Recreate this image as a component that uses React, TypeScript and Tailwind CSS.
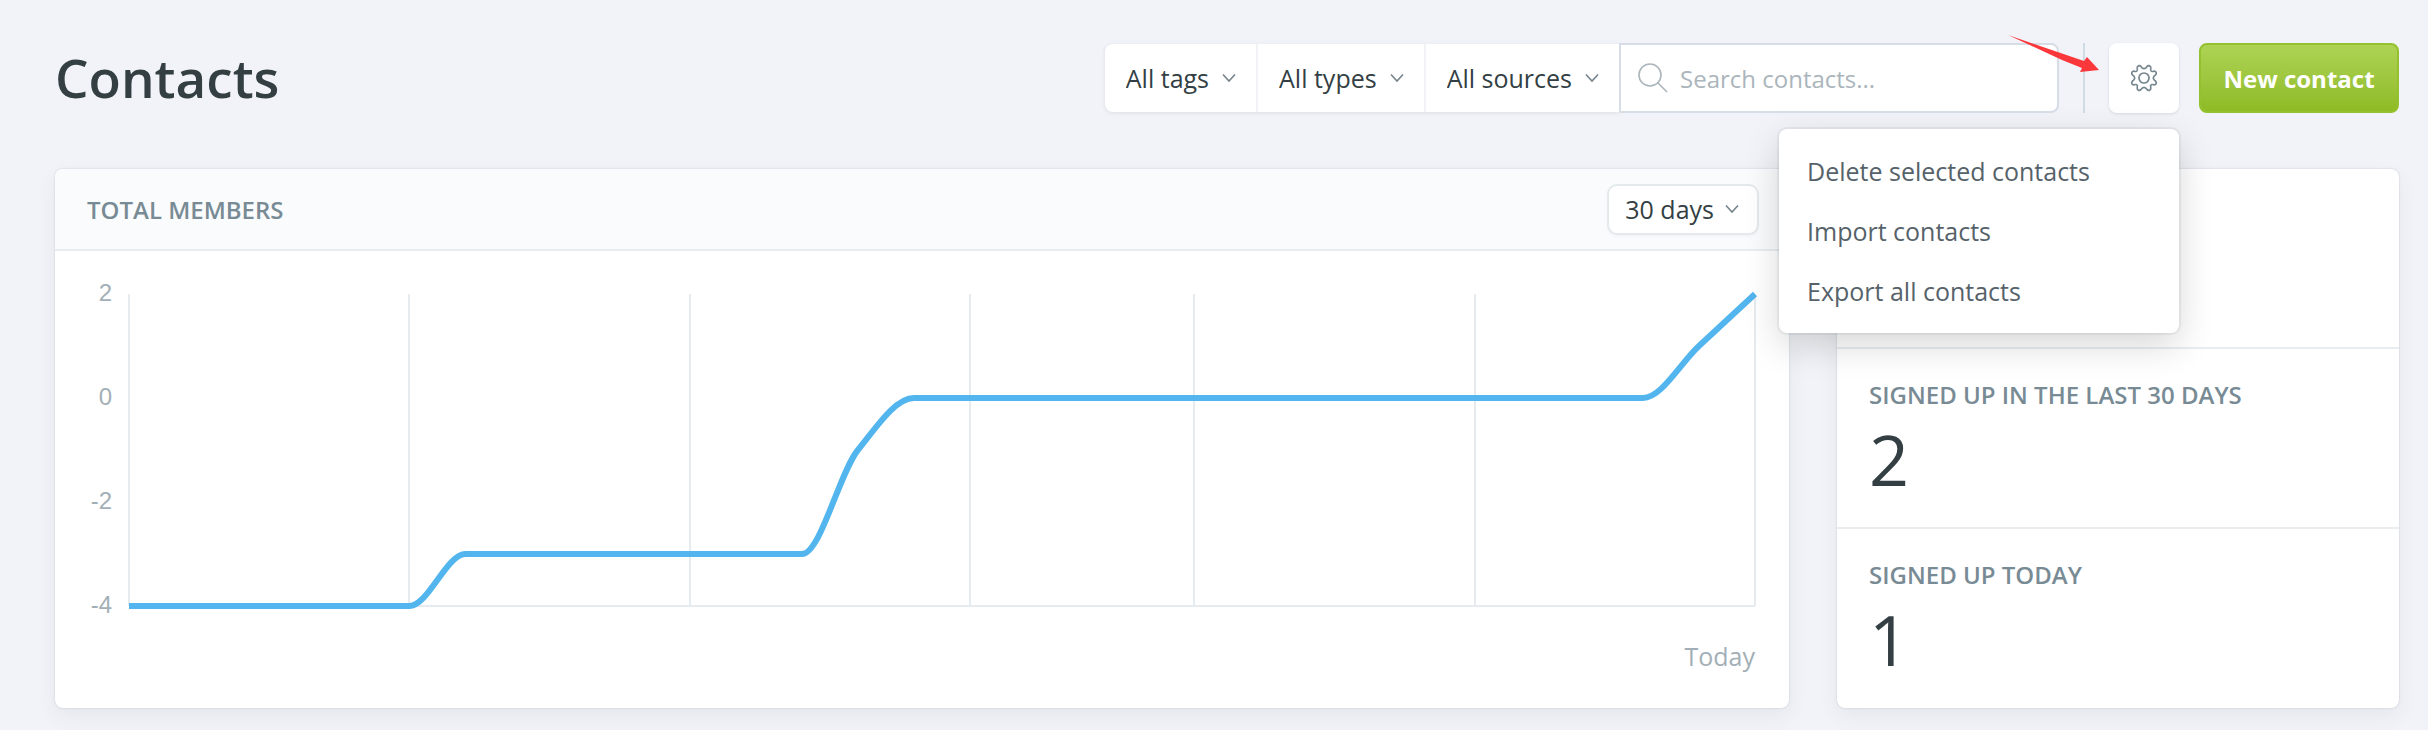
import { useState } from "react";

interface FilterProps {
	label: string;
	name: string;
}

interface StatProps {
	label: string;
	value: number;
}

const filters = [
	{ name: "tags", label: "All tags" },
	{ name: "types", label: "All types" },
	{ name: "sources", label: "All sources" },
];

const menuItems = [
	"Delete selected contacts",
	"Import contacts",
	"Export all contacts",
];

// members per day, oldest first
const members = [
	-4, -4, -4, -4, -4, -4, -3, -3, -3, -3, -3, -3, -3, -1, 0, 0, 0, 0, 0, 0, 0,
	0, 0, 0, 0, 0, 0, 0, 1, 2,
];
const yLabels = [2, 0, -2, -4];
const gridDays = [0, 5, 10, 15, 19, 24, 29];

const CHART_WIDTH = 1626;
const CHART_HEIGHT = 312;
const MAX = 2;
const MIN = -4;

const toX = (day: number) => (day / (members.length - 1)) * CHART_WIDTH;
const toY = (value: number) => ((MAX - value) / (MAX - MIN)) * CHART_HEIGHT;

// monotone cubic, so the flat parts never overshoot
const buildPath = (values: number[]) => {
	const slopes = values.slice(1).map((value, i) => value - values[i]);
	const tangents = values.map((_, i) => {
		if (i === 0) return slopes[0];
		if (i === values.length - 1) return slopes[i - 1];
		const before = slopes[i - 1];
		const after = slopes[i];
		return before * after <= 0 ? 0 : (2 * before * after) / (before + after);
	});

	return values
		.map((value, i) => {
			if (i === 0) return `M${toX(0)},${toY(value)}`;
			const c1 = values[i - 1] + tangents[i - 1] / 3;
			const c2 = value - tangents[i] / 3;
			return `C${toX(i - 2 / 3)},${toY(c1)} ${toX(i - 1 / 3)},${toY(c2)} ${toX(i)},${toY(value)}`;
		})
		.join(" ");
};

const Chevron = ({ className }: { className: string }) => (
	<svg
		viewBox="0 0 14 9"
		className={`pointer-events-none absolute top-1/2 h-[9px] w-[14px] -translate-y-1/2 ${className}`}
		fill="none"
		stroke="#75838b"
		strokeWidth="1.6"
	>
		<path d="M1 1l6 6.5L13 1" />
	</svg>
);

const Filter = ({ label, name }: FilterProps) => (
	<div className="relative border-r-2 border-[#f1f3f6] last-of-type:border-r-0">
		<select
			aria-label={label}
			name={name}
			className="field-sizing-content h-full appearance-none bg-transparent pt-[2px] pr-[47px] pl-[21px] text-[25px] text-[#333f44] outline-none"
		>
			<option>{label}</option>
		</select>
		<Chevron className="right-[20px]" />
	</div>
);

const SearchIcon = () => (
	<svg
		viewBox="0 0 30 30"
		className="size-[30px] shrink-0"
		fill="none"
		stroke="#abb5bc"
		strokeWidth="1.6"
	>
		<circle cx="12" cy="12" r="11" />
		<path d="M19.5 19.5L29 29" />
	</svg>
);

const GearIcon = () => (
	<svg
		viewBox="0 0 28 28"
		className="size-[28px]"
		fill="none"
		stroke="#75868f"
		strokeWidth="1.7"
		strokeLinejoin="round"
	>
		<circle cx="14" cy="14" r="5" />
		<path d="M8.3 1.9Q9.9 1.2 11 2.6Q12.3 4.7 14 4.7Q15.7 4.7 17 2.6Q18.1 1.2 19.7 1.9Q21 2.6 20.8 4.2Q20.2 6.6 21.1 7.1Q21.6 7.9 23.8 7.2Q25.5 7 26.1 8.3Q26.8 9.9 25.4 11Q23.3 12.3 23.3 14Q23.3 15.7 25.4 17Q26.8 18.1 26.1 19.7Q25.5 21 23.8 20.8Q21.6 20.1 21.1 20.9Q20.2 21.4 20.8 23.8Q21 25.4 19.7 26.1Q18.1 26.8 17 25.4Q15.7 23.3 14 23.3Q12.3 23.3 11 25.4Q9.9 26.8 8.3 26.1Q7 25.4 7.2 23.8Q7.8 21.4 6.9 20.9Q6.4 20.1 4.2 20.8Q2.5 21 1.9 19.7Q1.2 18.1 2.6 17Q4.7 15.7 4.7 14Q4.7 12.3 2.6 11Q1.2 9.9 1.9 8.3Q2.5 7 4.2 7.2Q6.4 7.9 6.9 7.1Q7.8 6.6 7.2 4.2Q7 2.6 8.3 1.9Z" />
	</svg>
);

const Arrow = () => (
	<svg
		viewBox="0 0 92 38"
		className="pointer-events-none absolute -top-[8px] -right-[15px] h-[38px] w-[92px] max-w-none"
		fill="#fa373b"
	>
		<path d="M0 0L76 26L79 22L91 35L72 37L74 33L54 25Z" />
	</svg>
);

const Stat = ({ label, value }: StatProps) => (
	<div className="h-[180px] border-t-2 border-[#e9edf0] px-8 pt-[30px]">
		<h3 className="text-[24px] leading-[32px] font-semibold text-[#788b95] uppercase">
			{label}
		</h3>
		<p className="text-[70px] leading-[96px] text-[#333f42]">{value}</p>
	</div>
);

const Chart = () => (
	<div className="flex pt-[41px] pr-[34px] pl-[32px]">
		<div className="flex h-[314px] w-[25px] flex-col justify-between text-right font-['Liberation_Sans',sans-serif] text-[24px] leading-[2px] text-[#a3afb6]">
			{yLabels.map((label) => (
				<span key={label}>{label}</span>
			))}
		</div>
		<div className="ml-[17px] min-w-0 flex-1">
			<svg
				viewBox={`0 0 ${CHART_WIDTH} ${CHART_HEIGHT}`}
				preserveAspectRatio="none"
				className="mt-[2px] h-[312px] w-full overflow-visible"
				fill="none"
			>
				<g stroke="#e6ebef" strokeWidth="2">
					{gridDays.map((day) => (
						<path
							key={day}
							d={`M${Math.round(toX(day))},0V${CHART_HEIGHT}`}
							vectorEffect="non-scaling-stroke"
						/>
					))}
					<path
						d={`M0,${CHART_HEIGHT}H${CHART_WIDTH}`}
						vectorEffect="non-scaling-stroke"
					/>
				</g>
				<path
					d={buildPath(members)}
					stroke="#52b5ee"
					strokeWidth="6"
					vectorEffect="non-scaling-stroke"
				/>
			</svg>
			<p className="mt-[32px] text-right text-[25px] leading-[36px] text-[#a3afb6]">
				Today
			</p>
		</div>
	</div>
);

const App = () => {
	const [menuOpen, setMenuOpen] = useState(true);

	return (
		<div className="min-h-screen bg-[#f2f3f8] pr-[29px] pb-[22px] pl-[55px] font-['Open_Sans',sans-serif]">
			<header className="flex items-center pt-[43px]">
				<h1 className="text-[53px] leading-[70px] font-semibold text-[#333f42]">
					Contacts
				</h1>
				<div className="ml-auto flex h-[70px]">
					<div className="my-[1px] flex rounded-l-lg bg-white shadow-[0_1px_4px_rgba(60,75,100,0.12)]">
						{filters.map((filter) => (
							<Filter key={filter.name} {...filter} />
						))}
					</div>
					<label className="relative flex w-[440px] items-center gap-[12px] rounded-r-lg border-2 border-[#d6dde6] bg-white px-[17px]">
						<SearchIcon />
						<input
							type="text"
							aria-label="Search contacts"
							placeholder="Search contacts..."
							className="min-w-0 flex-1 pt-[2px] text-[24px] text-[#333f44] outline-none placeholder:text-[#abb5bc]"
						/>
					</label>
					<div className="relative mr-6 ml-6 w-[2px] bg-[#cfdce3]">
						<Arrow />
					</div>
					<div className="relative mr-5">
						<button
							type="button"
							aria-label="Contact settings"
							onClick={() => setMenuOpen(!menuOpen)}
							className="flex size-[70px] items-center justify-center rounded-lg bg-white shadow-[0_1px_3px_rgba(60,75,100,0.15)]"
						>
							<GearIcon />
						</button>
						{menuOpen && (
							<ul className="absolute top-[86px] right-0 z-10 w-[400px] rounded-lg bg-white py-[12px] shadow-[0_0_0_2px_rgba(60,75,90,0.07),0_12px_36px_rgba(0,0,0,0.16)]">
								{menuItems.map((item) => (
									<li key={item}>
										<button
											type="button"
											className="h-[60px] w-full px-7 pt-[2px] text-left text-[25px] text-[#566269]"
										>
											{item}
										</button>
									</li>
								))}
							</ul>
						)}
					</div>
					<button
						type="button"
						className="w-[200px] rounded-lg border-2 border-[#94c12f] bg-linear-to-b from-[#aed354] to-[#8fbb25] pt-[2px] text-[24px] font-bold text-white"
					>
						New contact
					</button>
				</div>
			</header>

			<main className="mt-[56px] flex gap-12">
				<section className="h-[539px] min-w-0 flex-1 rounded-lg bg-white shadow-[0_0_2px_rgba(60,75,90,0.25),0_8px_20px_rgba(60,75,90,0.07)]">
					<div className="flex h-[82px] items-center justify-between rounded-t-lg border-b-2 border-[#e9edf0] bg-[#fafbfc] pr-[32px] pl-8">
						<h2 className="pt-[2px] text-[24px] font-semibold text-[#788b95] uppercase">
							Total members
						</h2>
						<div className="relative">
							<select
								aria-label="Period"
								className="field-sizing-content h-[47px] appearance-none rounded-lg bg-white pt-[2px] pr-[43px] pl-[16px] text-[25px] text-[#333f44] shadow-[0_0_0_2px_#e4e9ec,0_2px_4px_rgba(60,75,90,0.1)] outline-none"
							>
								<option>30 days</option>
							</select>
							<Chevron className="right-[18px]" />
						</div>
					</div>
					<Chart />
				</section>
				<aside className="h-[539px] w-[562px] shrink-0 rounded-lg bg-white pt-[178px] shadow-[0_0_2px_rgba(60,75,90,0.25),0_8px_20px_rgba(60,75,90,0.07)]">
					<Stat label="Signed up in the last 30 days" value={2} />
					<Stat label="Signed up today" value={1} />
				</aside>
			</main>
		</div>
	);
};

export default App;
